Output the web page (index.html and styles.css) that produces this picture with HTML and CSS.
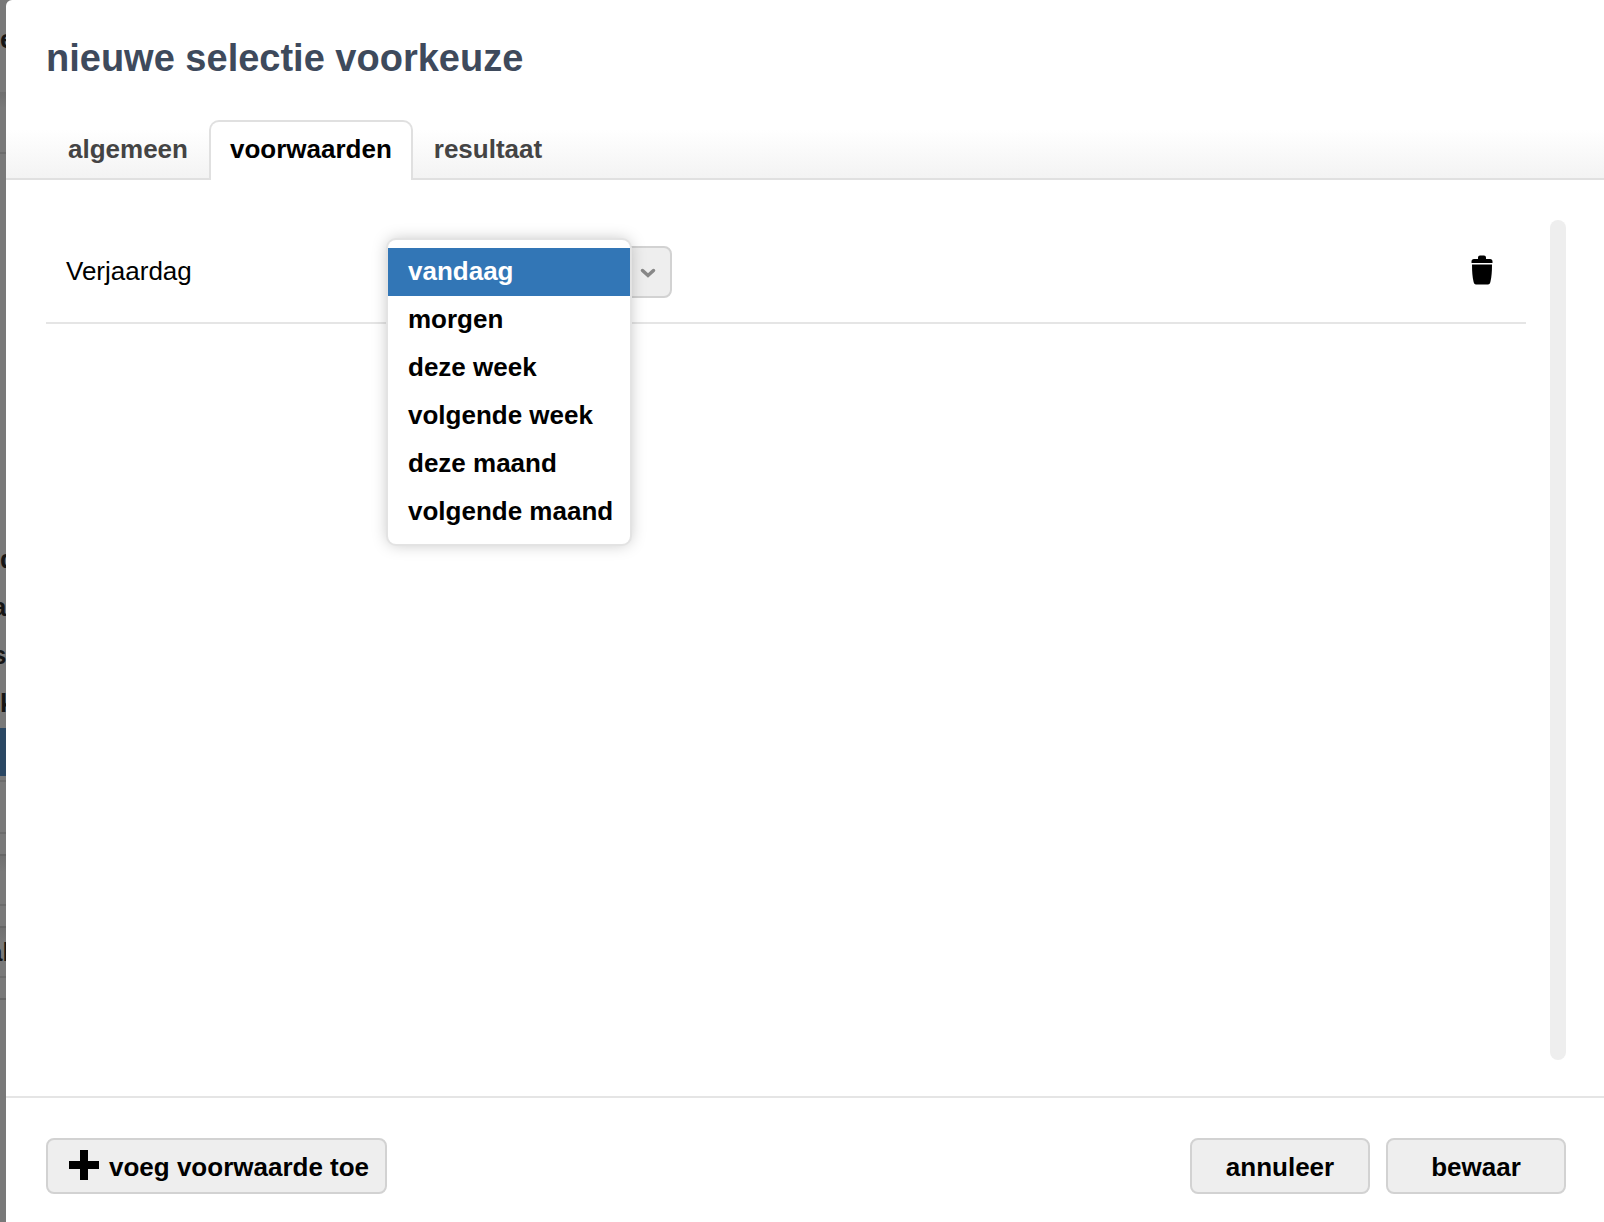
FILE: index.html
```
<!DOCTYPE html>
<html lang="nl">
<head>
    <meta charset="UTF-8">
    <meta name="viewport" content="width=device-width, initial-scale=1.0">
    <title>nieuwe selectie voorkeuze</title>
    <link rel="stylesheet" href="styles.css">
</head>
<body>
    <!-- dimmed page that stays visible beside the dialog -->
    <div class="backdrop" aria-hidden="true">
        <div class="back-title">e</div>
        <div class="back-bar"></div>
        <div class="back-list">
            <div class="back-item">d</div>
            <div class="back-item tail">a</div>
            <div class="back-item tail">s</div>
            <div class="back-item">k</div>
            <div class="back-item selected"></div>
        </div>
        <div class="back-row small"></div>
        <div class="back-row"></div>
        <div class="back-row gap"></div>
        <div class="back-row shaded"></div>
        <div class="back-row gap"></div>
        <div class="back-row shaded word">al</div>
        <div class="back-row gap"></div>
    </div>

    <main class="dialog">
        <header>
            <h1>nieuwe selectie voorkeuze</h1>
            <nav class="tabs">
                <a href="#algemeen">algemeen</a>
                <a href="#voorwaarden" class="active">voorwaarden</a>
                <a href="#resultaat">resultaat</a>
            </nav>
        </header>

        <section class="content">
            <div class="conditions">
                <div class="condition">
                    <label for="verjaardag">Verjaardag</label>
                    <div class="dropdown">
                        <select id="verjaardag">
                            <option>vandaag</option>
                            <option>morgen</option>
                            <option>deze week</option>
                            <option>volgende week</option>
                            <option>deze maand</option>
                            <option>volgende maand</option>
                        </select>
                        <svg class="chevron" width="16" height="12" viewBox="0 0 16 12"><path d="M2.500 3.500L8 8.500l5.500-5" fill="none" stroke="#888" stroke-width="3.500" stroke-linecap="round"/></svg>
                        <ul class="menu">
                            <li class="selected">vandaag</li>
                            <li>morgen</li>
                            <li>deze week</li>
                            <li>volgende week</li>
                            <li>deze maand</li>
                            <li>volgende maand</li>
                        </ul>
                    </div>
                    <button type="button" class="remove" aria-label="verwijder">
                        <svg width="22" height="30" viewBox="0 0 22 30">
                            <path d="M7 4V2.500Q7 .5 9 .5h4q2 0 2 2V4h4q2.500 0 2.500 2.500V8H.5V6.500Q.5 4 3 4z"/>
                            <path d="M1 9.500h20q0 11-1.500 17-.5 3-2.500 3H5q-2 0-2.500-3Q1 20.500 1 9.500z"/>
                        </svg>
                    </button>
                </div>
            </div>
            <div class="scrollbar"></div>
        </section>

        <footer>
            <button type="button" class="button add">
                <svg width="30" height="30" viewBox="0 0 30 30"><path d="M11 0h8v11h11v8H19v11h-8V19H0v-8h11z"/></svg>
                voeg voorwaarde toe
            </button>
            <button type="button" class="button">annuleer</button>
            <button type="button" class="button">bewaar</button>
        </footer>
    </main>
</body>
</html>
```

FILE: styles.css
```
* {
    box-sizing: border-box;
}

body {
    margin: 0;
    display: flex;
    height: 100vh;
    overflow: hidden;
    background-color: #797979;
    color: #000;
    font-family: "Liberation Sans", Arial, sans-serif;
    font-size: 26px;
    line-height: 48px;
}

/* backdrop */

.backdrop {
    flex: 0 0 6px;
    overflow: hidden;
    color: #151515;
    font-weight: bold;
}

.back-title {
    height: 92px;
    padding-top: 15px;
}

.back-bar {
    height: 62px;
    background: linear-gradient(#6f6f6f, #797979 16px);
    border-bottom: 2px solid #6c6c6c;
}

.back-list {
    padding-top: 382px;
}

.back-item {
    height: 48px;
    line-height: 46px;
}

.back-item.tail {
    text-indent: -8px;
}

.back-item.selected {
    background-color: #2a4763;
}

.back-row {
    height: 50px;
    border-bottom: 2px solid #6c6c6c;
}

.back-row.small {
    height: 6px;
}

.back-row.small + .back-row {
    height: 52px;
}

.back-row.gap {
    height: 22px;
    border-color: #666;
}

.back-row.shaded {
    background: linear-gradient(#707070, #797979 16px);
}

.back-row.word {
    text-indent: -12px;
}

/* dialog */

.dialog {
    flex: 1;
    display: flex;
    flex-direction: column;
    background-color: #fff;
    border-top-left-radius: 6px;
}

header h1 {
    margin: 0;
    padding: 34px 40px 38px;
    font-size: 38px;
    color: #3e4a5c;
}

.tabs {
    display: flex;
    height: 60px;
    padding: 0 41px;
    background: linear-gradient(#fff 10px, #f3f3f3);
    border-bottom: 2px solid #e0e0e0;
}

.tabs a {
    height: 60px;
    padding: 3px 19px 0;
    border: 2px solid transparent;
    border-bottom: 0;
    color: #444;
    font-weight: bold;
    text-decoration: none;
}

.tabs a.active {
    background-color: #fff;
    border-color: #e0e0e0;
    border-radius: 10px 10px 0 0;
    color: #000;
}

.content {
    flex: 1;
    display: flex;
    gap: 24px;
    padding: 40px 38px 36px 40px;
}

.conditions {
    flex: 1;
}

.condition {
    display: flex;
    align-items: center;
    padding: 26px 33px 24px 20px;
    border-bottom: 2px solid #e5e5e5;
}

.condition label {
    width: 320px;
    line-height: 46px;
    padding-bottom: 2px;
}

.dropdown {
    position: relative;
}

.dropdown select {
    display: block;
    appearance: none;
    width: 286px;
    height: 52px;
    padding: 0 20px;
    border: 2px solid #d2d2d2;
    border-radius: 8px;
    background-color: #eee;
    color: #000;
    font: inherit;
    font-weight: bold;
}

.chevron {
    position: absolute;
    top: 21px;
    right: 16px;
    pointer-events: none;
}

.menu {
    position: absolute;
    top: -6px;
    left: 2px;
    width: 242px;
    margin: 0;
    padding: 8px 0;
    border-radius: 8px;
    background-color: #fff;
    box-shadow: 0 0 0 2px #e3e3e3, 0 0 16px rgba(0, 0, 0, 0.25);
    list-style: none;
    font-weight: bold;
    white-space: nowrap;
}

.menu li {
    height: 48px;
    padding-left: 20px;
    line-height: 46px;
}

.menu li.selected {
    background-color: #3276b6;
    color: #fff;
}

.remove {
    display: flex;
    margin: 0 0 5px auto;
    padding: 0;
    border: 0;
    background: none;
}

.scrollbar {
    width: 16px;
    border-radius: 8px;
    background-color: #eee;
}

footer {
    display: flex;
    gap: 16px;
    padding: 40px 38px 28px 40px;
    border-top: 2px solid #e5e5e5;
}

.button {
    width: 180px;
    height: 56px;
    padding: 2px 16px 0;
    border: 2px solid #d2d2d2;
    border-radius: 8px;
    background-color: #eee;
    color: #000;
    font: inherit;
    font-weight: bold;
    line-height: 50px;
    white-space: nowrap;
}

.button.add {
    display: flex;
    gap: 10px;
    width: auto;
    margin-right: auto;
    padding-left: 21px;
}

.button.add svg {
    margin-top: 8px;
}
```
